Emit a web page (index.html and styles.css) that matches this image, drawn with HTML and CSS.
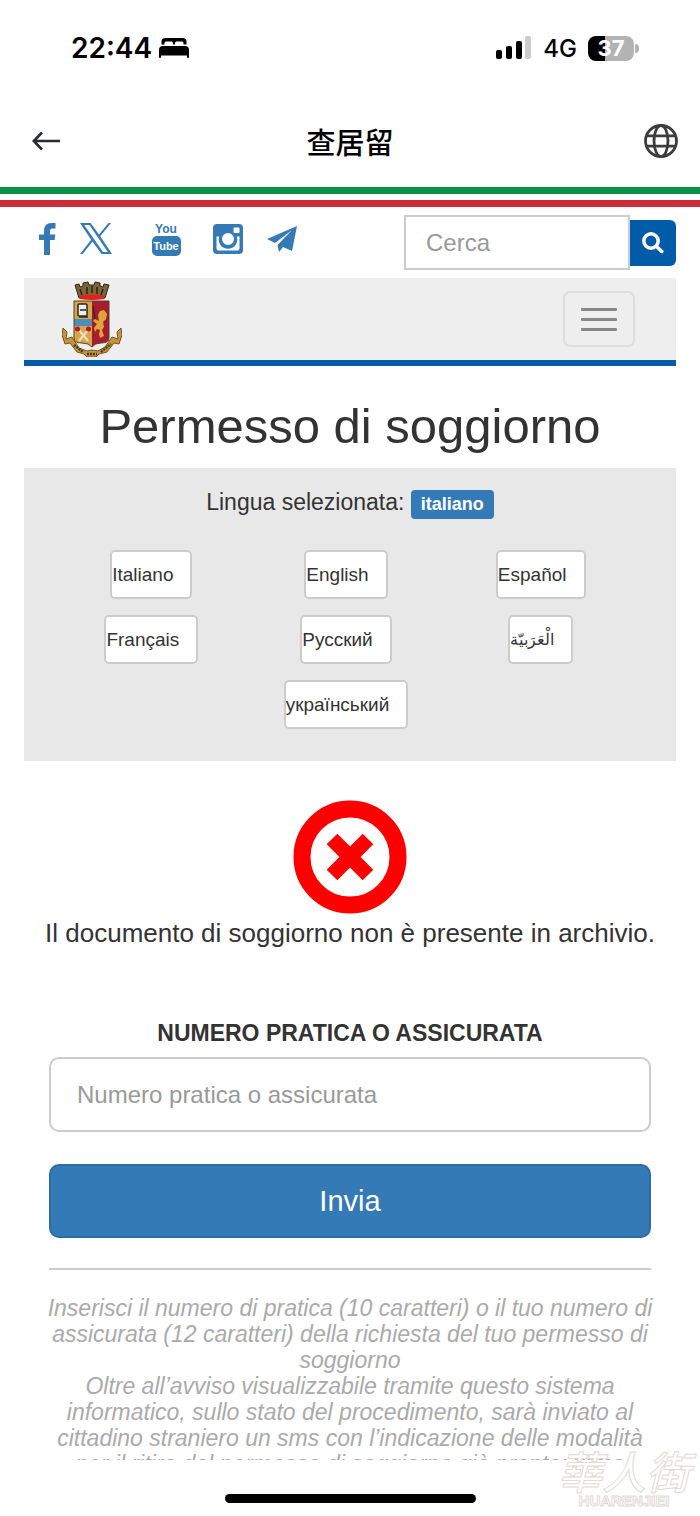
FILE: index.html
```html
<!DOCTYPE html>
<html lang="it">
<head>
  <meta charset="UTF-8" />
  <meta name="viewport" content="width=device-width, initial-scale=1.0" />
  <title>Permesso di soggiorno</title>
  <link rel="stylesheet" href="styles.css">
</head>
<body>
  <div class="status-bar">
    <div class="status-left">
      <span class="clock">22:44</span>
      <svg width="30" height="22" viewBox="0 0 30 22">
        <path d="M2.500 7.500V4.500Q2.500 1 6.500 1H23.500Q27.500 1 27.500 4.500V7.500H24.500V6Q24.500 4.500 23 4.500H17.500Q16 4.500 16 6V7.500H14V6Q14 4.500 12.500 4.500H7Q5.500 4.500 5.500 6V7.500Z" />
        <path d="M0 20V13Q0 9 4 9H26Q30 9 30 13V20Q30 21 29 21Q28 21 28 20V18.500H2V20Q2 21 1 21Q0 21 0 20Z" />
      </svg>
    </div>
    <div class="status-right">
      <svg width="36" height="24" viewBox="0 0 36 24">
        <rect x="0" y="14" width="6" height="9" rx="2" />
        <rect x="10" y="10" width="6" height="13" rx="2" />
        <rect x="20" y="5" width="6" height="18" rx="2" />
        <rect x="29" y="0" width="6" height="23" rx="2" fill="#ccc" />
      </svg>
      <span class="network">4G</span>
      <div class="battery"><span>37</span></div>
    </div>
  </div>

  <header class="app-bar">
    <button class="icon-btn back" aria-label="Back">
      <svg width="28" height="20" viewBox="0 0 28 20" fill="none" stroke="#2b2b35" stroke-width="2.600">
        <path d="M28 10H2M10 1.500L1.800 10L10 18.500" />
      </svg>
    </button>
    <div class="app-title">查居留</div>
    <button class="icon-btn" aria-label="Language">
      <svg width="34" height="34" viewBox="0 0 34 34" fill="none" stroke="#3c3c3c" stroke-width="2.800">
        <circle cx="17" cy="17" r="15.500" />
        <ellipse cx="17" cy="17" rx="7" ry="15.500" />
        <path d="M3 11.800H31M3 22.200H31" />
      </svg>
    </button>
  </header>

  <main class="page">
    <div class="flag"></div>

    <div class="container">
      <div class="top-row">
        <nav class="social">
          <a href="#" aria-label="Facebook">
            <svg width="17" height="32" viewBox="0 0 17 32"><path d="M16.500 0V5.500H13.500Q11 5.500 11 8V11.500H16.300L15.600 17H11V32H5V17H0V11.500H5V7.500Q5 0 12.500 0Z" /></svg>
          </a>
          <a href="#" aria-label="X">
            <svg width="32" height="31" viewBox="0 0 32 31"><path fill-rule="evenodd" d="M0 0H10.500L19 11.500L28.500 0H31L20.200 13.300L32 31H21.500L12.500 18.500L2.700 31H0L11.200 16.800ZM4.200 2L23 29H27.800L9.500 2Z" /></svg>
          </a>
          <a href="#" class="youtube" aria-label="YouTube">
            <svg width="29" height="35" viewBox="0 0 29 35">
              <text x="14" y="12">You</text>
              <rect x="0" y="15" width="29" height="20" rx="5" />
              <text class="tube" x="14" y="29">Tube</text>
            </svg>
          </a>
          <a href="#" class="instagram" aria-label="Instagram">
            <svg width="30" height="30" viewBox="0 0 30 30">
              <path fill-rule="evenodd" d="M4 0H26Q30 0 30 4V26Q30 30 26 30H4Q0 30 0 26V4Q0 0 4 0ZM3.500 12.500V24.500Q3.500 26.500 5.500 26.500H24.500Q26.500 26.500 26.500 24.500V12.500H23.800A9.300 9.300 0 1 1 6.200 12.500ZM21.500 3.500Q20.500 3.500 20.500 4.500V8Q20.500 9 21.500 9H25.500Q26.500 9 26.500 8V4.500Q26.500 3.500 25.500 3.500ZM15 9A6 6 0 1 0 15 21A6 6 0 1 0 15 9Z" />
            </svg>
          </a>
          <a href="#" aria-label="Telegram">
            <svg width="30" height="26" viewBox="0 0 30 26"><path d="M30 0L25 25L16 21L12 26L10.500 19L25 4L8 17L0 13Z" /></svg>
          </a>
        </nav>
        <form class="search">
          <input type="text" placeholder="Cerca" aria-label="Cerca" />
          <button type="button" aria-label="Avvia ricerca">
            <svg width="22" height="22" viewBox="0 0 22 22" fill="none" stroke="#fff" stroke-width="3.500" stroke-linecap="round">
              <circle cx="9" cy="9" r="7.200" />
              <path d="M14.500 14.500L19.800 19.500" />
            </svg>
          </button>
        </form>
      </div>

      <div class="navbar">
        <a href="#" aria-label="Polizia di Stato">
          <svg width="60" height="76" viewBox="0 0 60 76">
            <!-- crown -->
            <path d="M13 4L17 3L18 6L21 5V2L26 1L27 4H32L33 1L38 2V5L41 6L42 3L47 4L43 17Q30 13 17 17Z" fill="#7d6338" stroke="#2d2415" />
            <path d="M18 8L20 14M25 6V13M30 5V12M35 6V13M41 8L39 14" stroke="#2d2415" stroke-width="1.500" />
            <path d="M17 15Q30 12 43 15L42 18Q30 20 18 18Z" fill="#e3201b" />
            <!-- shield -->
            <path d="M12 20H30V66Q27 62 20 62Q12 62 12 57Z" fill="#d9a646" />
            <path d="M30 20H47V57Q47 62 39 62Q33 62 30 66Z" fill="#a81c30" />
            <rect x="12" y="38" width="18" height="7" fill="#4b8dbb" />
            <rect x="16" y="23" width="9" height="12" rx="1" fill="#eee" stroke="#292720" stroke-width="1.500" />
            <path d="M18 29H24M17 36H26" stroke="#292720" stroke-width="1.300" />
            <path d="M17 49L26 60M26 49L17 60" stroke="#e5e0d0" stroke-width="2" />
            <circle cx="15.500" cy="48" r="2.500" fill="#b61720" />
            <circle cx="26.500" cy="48" r="2.500" fill="#b61720" />
            <path d="M42 29L45 33L44 38L41 41L42 46L40 49L42 55L38 57L37 53L38 49L35 48L33 51L32 47L35 43L31 40L33 38L37 40L36 34L38 30Z" fill="#dda638" />
            <path d="M31 25L33 38" stroke="#3b292a" stroke-width="1.500" />
            <path d="M12 20H47V57Q47 62 39 62Q33 62 30 66Q27 62 20 62Q12 62 12 57Z" fill="none" stroke="#51402a" />
            <!-- ribbon -->
            <path d="M1 47L5 51L4 58L10 56L17 67L25 70L30 69L36 70L43 66L50 56L56 58L55 51L59 47L60 54L57 63L52 62L45 71L37 73L34 76H25L22 73L15 71L8 62L3 63L0 54Z" fill="#c69535" stroke="#705329" />
            <path d="M12 64L21 71M25 73H35M39 71L49 63" stroke="#493917" stroke-width="2.500" stroke-dasharray="2 1" />
          </svg>
        </a>
        <button class="menu-btn" aria-label="Menu"><span></span><span></span><span></span></button>
      </div>

      <h1>Permesso di soggiorno</h1>

      <section class="languages">
        <p>Lingua selezionata: <span class="label">italiano</span></p>
        <div class="language-grid">
          <button>Italiano</button>
          <button>English</button>
          <button>Español</button>
          <button>Français</button>
          <button>Русский</button>
          <button class="arabic" lang="ar">الْعَرَبيّة</button>
          <button class="middle">український</button>
        </div>
      </section>

      <section class="result">
        <svg width="114" height="114" viewBox="0 0 114 114">
          <circle cx="57" cy="57" r="48" fill="none" stroke="#f00" stroke-width="17" />
          <path d="M39 39L75 75M75 39L39 75" stroke="#f00" stroke-width="15" />
        </svg>
        <p>Il documento di soggiorno non è presente in archivio.</p>
      </section>

      <form class="request">
        <label for="pratica">NUMERO PRATICA O ASSICURATA</label>
        <input type="text" id="pratica" placeholder="Numero pratica o assicurata" />
        <button type="button">Invia</button>
        <hr />
        <p class="help">Inserisci il numero di pratica (10 caratteri) o il tuo numero di assicurata (12 caratteri) della richiesta del tuo permesso di soggiorno<br />
        Oltre all’avviso visualizzabile tramite questo sistema informatico, sullo stato del procedimento, sarà inviato al cittadino straniero un sms con l’indicazione delle modalità per il ritiro del permesso di soggiorno già pronto; firma</p>
      </form>
    </div>
  </main>

  <footer class="bottom-bar">
    <div class="home-indicator"></div>
  </footer>
  <div class="watermark">
    <div class="watermark-name" lang="zh-Hant">華人街</div>
    <div class="watermark-latin">HUARENJIEI</div>
  </div>
</body>
</html>
```
FILE: styles.css
```css
* {
  box-sizing: border-box;
}

body {
  margin: 0;
  height: 100vh;
  display: flex;
  flex-direction: column;
  position: relative;
  overflow: hidden;
  background: #fff;
  color: #333;
  font-family: "Liberation Sans", Arial, sans-serif;
  font-size: 24px;
}

svg {
  display: block;
}

button {
  font-family: inherit;
  cursor: pointer;
}

.status-bar {
  flex: none;
  height: 96px;
  padding: 0 66px 0 71px;
  display: flex;
  align-items: center;
  justify-content: space-between;
  color: #000;
  font-family: Inter, sans-serif;
}

.status-left, .status-right {
  display: flex;
  align-items: center;
}

.status-left {
  gap: 7px;
}

.clock {
  font-size: 28px;
  font-weight: 600;
}

.status-right {
  gap: 11px;
}

.network {
  font-size: 24px;
  font-weight: 500;
}

.battery {
  position: relative;
  width: 46px;
  height: 25px;
  border-radius: 8px;
  background: linear-gradient(90deg, #000 37%, #b3b3b3 37%);
  color: #fff;
  font-size: 22px;
  font-weight: 700;
  line-height: 25px;
  text-align: center;
}

.battery::after {
  content: "";
  position: absolute;
  left: 47px;
  top: 8px;
  width: 4px;
  height: 9px;
  border-radius: 0 4px 4px 0;
  background: #b3b3b3;
}

.app-bar {
  flex: none;
  height: 91px;
  padding: 0 22px 2px;
  display: grid;
  grid-template-columns: 44px 1fr 44px;
  align-items: center;
  color: #000;
}

.icon-btn {
  padding: 0;
  border: none;
  background: none;
  justify-self: end;
}

.icon-btn.back {
  padding-right: 6px;
}

.app-title {
  font-family: "Noto Sans CJK SC", sans-serif;
  font-size: 29px;
  font-weight: 500;
  line-height: 40px;
  text-align: center;
}

.page {
  flex: 1;
  min-height: 0;
  overflow: hidden;
}

.flag {
  height: 20px;
  border-top: 7px solid #089247;
  border-bottom: 7px solid #cb2c37;
}

.container {
  padding: 0 24px;
}

.top-row {
  height: 71px;
  display: flex;
  align-items: center;
  justify-content: space-between;
}

.social {
  display: flex;
  align-items: center;
  gap: 24px;
  padding: 0 0 8px 15px;
}

.social svg {
  fill: #337ab7;
}

.social text {
  font-size: 12px;
  font-weight: 700;
  text-anchor: middle;
}

.social .tube {
  fill: #fff;
  font-size: 11px;
}

.youtube {
  margin-left: 16px;
}

.instagram {
  margin-left: 8px;
}

.search {
  display: flex;
  align-items: center;
}

.search input {
  width: 226px;
  height: 55px;
  padding: 0 20px;
  border: 2px solid #ccc;
  border-radius: 0;
  font-family: inherit;
  font-size: 24px;
}

input::placeholder {
  color: #999;
  opacity: 1;
}

.search button {
  width: 46px;
  height: 46px;
  padding: 0;
  display: grid;
  place-items: center;
  border: none;
  border-radius: 0 6px 6px 0;
  background: #005ca9;
}

.navbar {
  height: 88px;
  padding: 0 41px 0 38px;
  display: flex;
  align-items: center;
  justify-content: space-between;
  background: #eee;
  border-bottom: 6px solid #065ba8;
}

.menu-btn {
  width: 72px;
  height: 56px;
  display: flex;
  flex-direction: column;
  align-items: center;
  justify-content: center;
  gap: 7px;
  border: 2px solid #ddd;
  border-radius: 7px;
  background: none;
}

.menu-btn span {
  width: 36px;
  height: 3px;
  border-radius: 1px;
  background: #888;
}

h1 {
  margin: 32px 0 14px;
  font-size: 49px;
  font-weight: 400;
  line-height: 56px;
  text-align: center;
}

.languages {
  padding: 16px 38px 32px 30px;
  background: #e8e8e8;
}

.languages p {
  margin: 0 0 30px 8px;
  font-size: 23px;
  line-height: 36px;
  text-align: center;
}

.label {
  display: inline-block;
  padding: 0 10px;
  border-radius: 4px;
  background: #337ab7;
  color: #fff;
  font-size: 18px;
  font-weight: 700;
  line-height: 29px;
}

.language-grid {
  display: grid;
  grid-template-columns: repeat(3, 1fr);
  justify-items: center;
  gap: 16px 0;
}

.language-grid button {
  height: 49px;
  padding: 0 17px 0 0;
  border: 2px solid #ccc;
  border-radius: 5px;
  background: #fff;
  color: #333;
  font-size: 19px;
}

.language-grid .arabic {
  font-size: 16px;
}

.language-grid .middle {
  grid-column: 2;
}

.result {
  padding-top: 39px;
  text-align: center;
}

.result svg {
  margin: 0 auto;
}

.result p {
  margin: 3px 0 0;
  font-size: 26px;
  line-height: 32px;
}

.request {
  padding: 68px 25px 0;
  text-align: center;
}

.request label {
  display: block;
  font-size: 23px;
  font-weight: 700;
  line-height: 32px;
}

.request input {
  display: block;
  width: 100%;
  height: 75px;
  margin: 8px 0 32px;
  padding: 0 26px;
  border: 2px solid #ccc;
  border-radius: 10px;
  font-family: inherit;
  font-size: 24px;
}

.request button {
  width: 100%;
  height: 74px;
  border: 2px solid #2e6da4;
  border-radius: 10px;
  background: #337ab7;
  color: #fff;
  font-size: 29px;
}

hr {
  margin: 30px 0 25px;
  border: none;
  border-top: 2px solid #ccc;
}

.help {
  margin: 0 -6px;
  color: #aaa;
  font-size: 23px;
  font-style: italic;
  line-height: 26px;
}

.bottom-bar {
  flex: none;
  height: 56px;
  padding-top: 34px;
}

.home-indicator {
  width: 251px;
  height: 9px;
  margin: 0 auto;
  border-radius: 5px;
  background: #000;
}

/* outlined mark over the corner of the page */
.watermark {
  position: absolute;
  right: 10px;
  bottom: 6px;
  color: #fff;
  text-align: center;
  -webkit-text-stroke: 1px #e0dbd4;
}

.watermark-name {
  font-family: "Noto Sans CJK TC", sans-serif;
  font-size: 44px;
  font-style: italic;
  font-weight: 500;
  line-height: 44px;
}

.watermark-latin {
  font-size: 15px;
  font-weight: 700;
  line-height: 18px;
}
```
